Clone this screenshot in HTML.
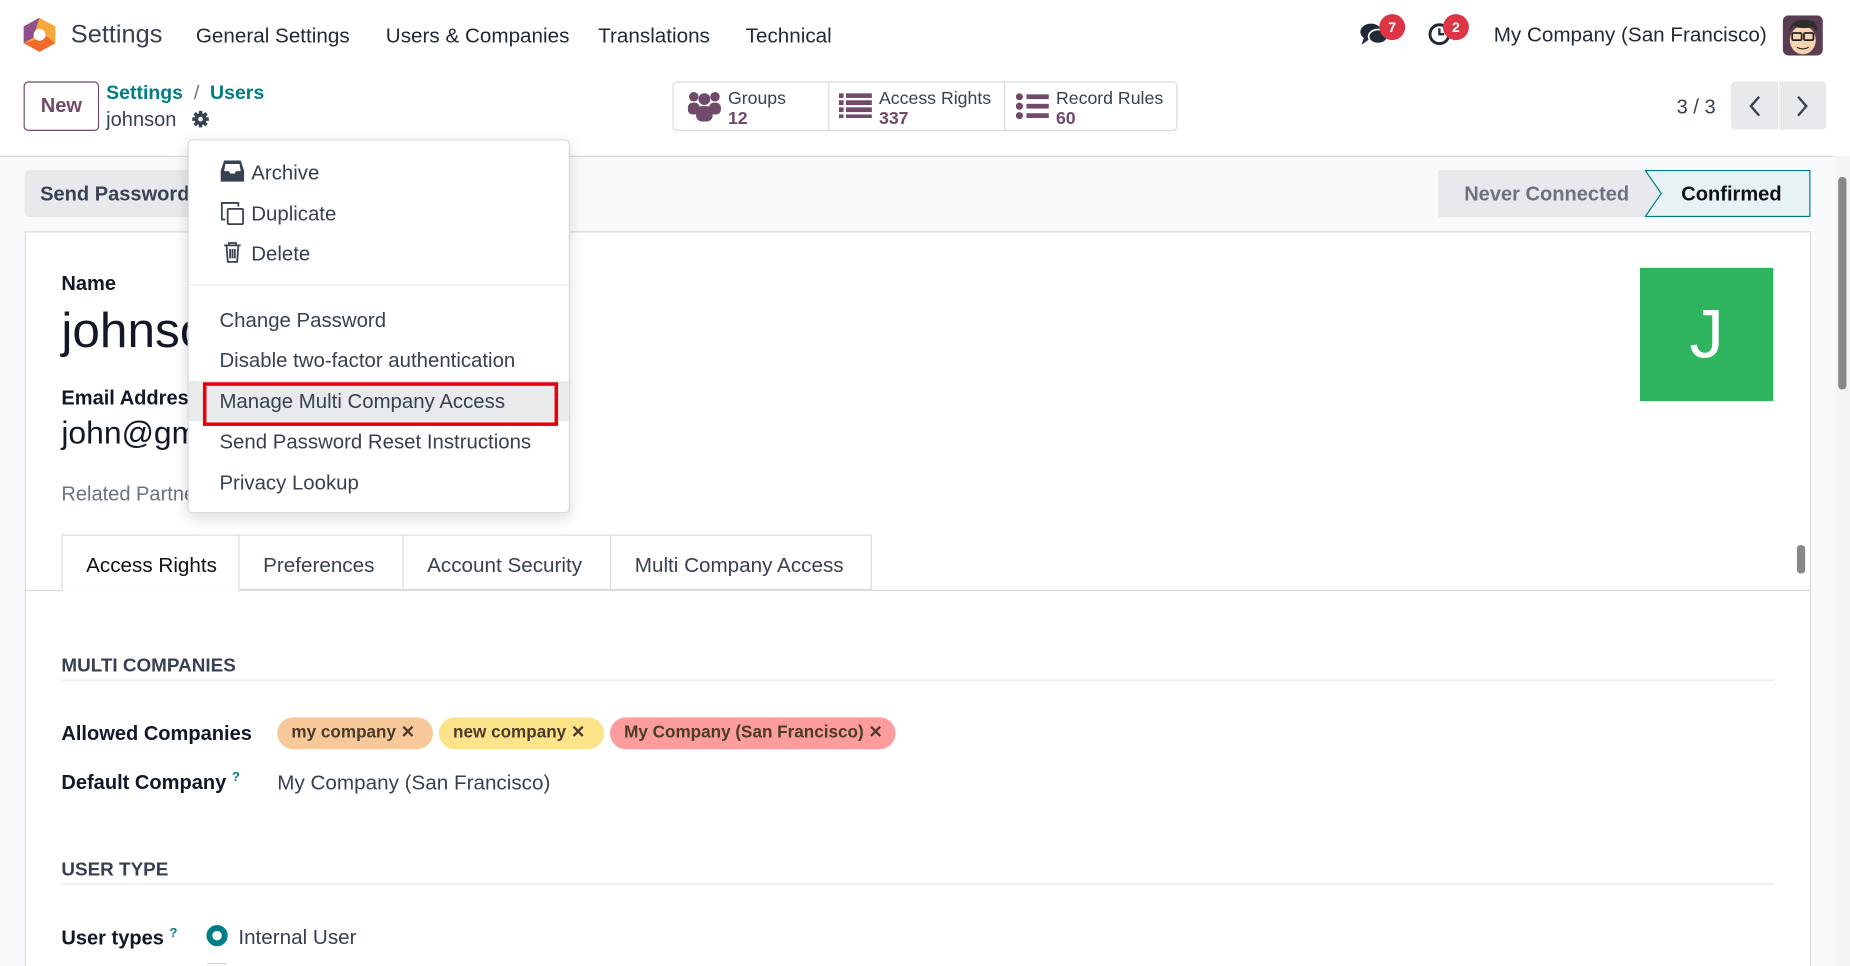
<!DOCTYPE html>
<html><head><meta charset="utf-8"><style>
*{box-sizing:border-box;margin:0;padding:0}
html,body{width:1850px;height:966px;overflow:hidden;background:#fff}
#w{position:absolute;left:0;top:0;width:1568px;height:819px;transform:scale(1.17985);transform-origin:0 0;font-family:"Liberation Sans",sans-serif;color:#374151;background:#fff;overflow:hidden}
.a{position:absolute;white-space:nowrap}
.nav{font-size:17.5px;color:#1f2937;top:20px}
.pur{fill:#71496a}
.di{font-size:17.3px;color:#374151;left:26px}
.lbl{font-weight:bold;font-size:17px;color:#111827}
.tag{position:absolute;top:608px;height:27px;border-radius:14px;font-size:14.5px;font-weight:bold;color:#4b3b2b;padding:5px 12px;white-space:nowrap}
.tab{position:absolute;top:453px;height:47px;border:1px solid #d8dadd;border-left:none;font-size:17.5px;color:#374151;padding:15px 20px;white-space:nowrap}
</style></head><body><div id="w">
<svg class="a" style="left:20px;top:15px" width="27" height="29" viewBox="0 0 27 29"><polygon points="13.5,0 27,7.5 27,21.5 13.5,29 0,21.5 0,7.5" fill="#f7a83c"/><polygon points="13.5,0 0,7.5 0,21.5 8,17" fill="#8f4f8e"/><polygon points="0,21.5 13.5,29 27,21.5 20,16" fill="#f06a2b"/><circle cx="13.5" cy="14.5" r="5" fill="#fff"/></svg>
<div class="a" style="left:60px;top:17px;font-size:21.5px;color:#374151">Settings</div>
<div class="a nav" style="left:166px">General Settings</div>
<div class="a nav" style="left:327px">Users &amp; Companies</div>
<div class="a nav" style="left:507px">Translations</div>
<div class="a nav" style="left:632px">Technical</div>
<svg class="a" style="left:1152px;top:18px" width="26" height="22" viewBox="0 0 26 22"><ellipse cx="10" cy="9" rx="9" ry="7" fill="#1f2937"/><path d="M4 14 L2 20 L9 15Z" fill="#1f2937"/><ellipse cx="16" cy="13" rx="8" ry="6" fill="#1f2937" stroke="#fff" stroke-width="1.5"/></svg>
<div class="a" style="left:1169px;top:12px;width:22px;height:22px;border-radius:11px;background:#dc3545;color:#fff;font-size:12px;font-weight:bold;text-align:center;line-height:22px">7</div>
<svg class="a" style="left:1210px;top:19px" width="20" height="20"><circle cx="10" cy="10" r="8" fill="none" stroke="#1f2937" stroke-width="2.5"/><path d="M10 5V10H14" stroke="#1f2937" stroke-width="2" fill="none"/></svg>
<div class="a" style="left:1223px;top:12px;width:22px;height:22px;border-radius:11px;background:#dc3545;color:#fff;font-size:12px;font-weight:bold;text-align:center;line-height:22px">2</div>
<div class="a" style="left:1266px;top:19px;font-size:17.5px;color:#1f2937">My Company (San Francisco)</div>
<svg class="a" style="left:1511px;top:13px" width="34" height="34"><rect width="34" height="34" rx="5" fill="#5a3d52"/><ellipse cx="17" cy="21" rx="11" ry="12" fill="#f7d2b0"/><path d="M5 14 Q8 2 20 4 Q30 4 29 14 L26 10 Q15 12 9 9Z" fill="#2d2d2d"/><rect x="8" y="15" width="8" height="6" rx="1" fill="none" stroke="#222" stroke-width="1.5"/><rect x="18" y="15" width="8" height="6" rx="1" fill="none" stroke="#222" stroke-width="1.5"/><path d="M12 27 Q17 30 22 27" stroke="#222" fill="none"/></svg>
<div class="a" style="left:20px;top:69px;width:64px;height:42px;border:1px solid #71496a;border-radius:4px;color:#71496a;font-size:17px;font-weight:bold;text-align:center;line-height:40px">New</div>
<div class="a" style="left:90px;top:70px;font-size:16.5px;color:#017e84;font-weight:bold">Settings <span style="color:#6b7280;font-weight:normal">&nbsp;/&nbsp;</span> Users</div>
<div class="a" style="left:90px;top:92px;font-size:17px;color:#374151">johnson</div>
<svg class="a" style="left:162px;top:93px" width="16" height="16" viewBox="0 0 16 16"><circle cx="8" cy="8" r="5" fill="#374151"/><g stroke="#374151" stroke-width="3"><path d="M8 1V15M1 8H15M3 3L13 13M13 3L3 13"/></g><circle cx="8" cy="8" r="2" fill="#fff"/></svg>
<div class="a" style="left:570px;top:69px;width:428px;height:42px;border:1px solid #d8dadd;border-radius:4px"></div>
<div class="a" style="left:702px;top:70px;width:1px;height:40px;background:#d8dadd"></div>
<div class="a" style="left:851px;top:70px;width:1px;height:40px;background:#d8dadd"></div>
<svg class="a" style="left:582px;top:76px" width="30" height="28"><circle cx="6" cy="6" r="4" class="pur"/><circle cx="24" cy="6" r="4" class="pur"/><circle cx="15" cy="8" r="5" class="pur"/><rect x="1" y="11" width="10" height="10" rx="4" class="pur"/><rect x="19" y="11" width="10" height="10" rx="4" class="pur"/><rect x="8" y="14" width="14" height="13" rx="5" class="pur"/></svg>
<div class="a" style="left:617px;top:75px;font-size:15px;color:#374151">Groups</div>
<div class="a" style="left:617px;top:92px;font-size:15px;color:#71496a;font-weight:bold">12</div>
<svg class="a" style="left:711px;top:79px" width="28" height="22"><g class="pur"><rect x="0" y="0" width="4" height="4"/><rect x="6" y="0" width="22" height="4"/><rect x="0" y="6" width="4" height="4"/><rect x="6" y="6" width="22" height="4"/><rect x="0" y="12" width="4" height="4"/><rect x="6" y="12" width="22" height="4"/><rect x="0" y="18" width="4" height="3"/><rect x="6" y="18" width="22" height="3"/></g></svg>
<div class="a" style="left:745px;top:75px;font-size:15px;color:#374151">Access Rights</div>
<div class="a" style="left:745px;top:92px;font-size:15px;color:#71496a;font-weight:bold">337</div>
<svg class="a" style="left:861px;top:79px" width="28" height="22"><g class="pur"><circle cx="3" cy="3" r="3"/><rect x="9" y="1" width="19" height="4"/><circle cx="3" cy="11" r="3"/><rect x="9" y="9" width="19" height="4"/><circle cx="3" cy="19" r="3"/><rect x="9" y="17" width="19" height="4"/></g></svg>
<div class="a" style="left:895px;top:75px;font-size:15px;color:#374151">Record Rules</div>
<div class="a" style="left:895px;top:92px;font-size:15px;color:#71496a;font-weight:bold">60</div>
<div class="a" style="left:1421px;top:81px;font-size:17px;color:#374151">3 / 3</div>
<div class="a" style="left:1467px;top:69px;width:81px;height:41px;background:#e7e9ed;border-radius:4px"></div>
<div class="a" style="left:1507px;top:69px;width:1px;height:41px;background:#fff"></div>
<svg class="a" style="left:1480px;top:80px" width="56" height="20" fill="none" stroke="#374151" stroke-width="2"><path d="M11 2L4 10L11 18M44 2L51 10L44 18"/></svg>
<div class="a" style="left:0;top:132px;width:1555px;height:687px;background:#f9fafb;border-top:1px solid #d8dadd"></div>
<div class="a" style="left:21px;top:144px;width:145px;height:40px;background:#e7e9ed;border-radius:4px;font-size:17px;font-weight:bold;color:#374151;padding:11px 13px">Send Password</div>
<div class="a" style="left:1219px;top:144px;width:190px;height:40px;background:#e7e9ed;font-size:17px;font-weight:bold;color:#6b7280;padding:11px 22px">Never Connected</div>
<svg class="a" style="left:1394px;top:144px" width="141" height="40"><polygon points="0.5,0.5 140,0.5 140,39.5 0.5,39.5 14,20" fill="#e6f2f3" stroke="#017e84"/></svg>
<div class="a" style="left:1425px;top:155px;font-size:17px;font-weight:bold;color:#111">Confirmed</div>
<div class="a" style="left:21px;top:196px;width:1514px;height:623px;background:#fff;border:1px solid #d8dadd;border-bottom:none"></div>
<div class="a" style="left:52px;top:231px;font-size:17px;font-weight:bold;color:#111827">Name</div>
<div class="a" style="left:52px;top:256px;font-size:42px;color:#111827">johnson</div>
<div class="a" style="left:52px;top:328px;font-size:17px;font-weight:bold;color:#111827">Email Address</div>
<div class="a" style="left:52px;top:352px;font-size:27px;color:#111827">john@gmail.com</div>
<div class="a" style="left:52px;top:409px;font-size:17px;color:#6b7280">Related Partner</div>
<div class="a" style="left:1390px;top:227px;width:113px;height:113px;background:#2fb45f;color:#fff;font-size:58px;text-align:center;line-height:113px">J</div>
<div class="a" style="left:22px;top:500px;width:1512px;height:1px;background:#d8dadd"></div>
<div class="a" style="left:52px;top:453px;width:151px;height:48px;border:1px solid #d8dadd;border-bottom:none;background:#fff;font-size:17.5px;color:#111;padding:15px 20px">Access Rights</div>
<div class="tab" style="left:203px;width:139px">Preferences</div>
<div class="tab" style="left:342px;width:176px">Account Security</div>
<div class="tab" style="left:518px;width:221px">Multi Company Access</div>
<div class="a" style="left:1523px;top:462px;width:7px;height:24px;background:#888;border-radius:3px"></div>
<div class="a" style="left:52px;top:556px;font-size:16px;font-weight:bold;color:#374151">MULTI COMPANIES</div>
<div class="a" style="left:52px;top:576px;width:1452px;height:1px;background:#e5e7eb"></div>
<div class="a lbl" style="left:52px;top:612px">Allowed Companies</div>
<div class="tag" style="left:235px;width:132px;background:#f6c89a">my company ✕</div>
<div class="tag" style="left:372px;width:140px;background:#fbe38a">new company ✕</div>
<div class="tag" style="left:517px;width:242px;background:#fd9c9c">My Company (San Francisco) ✕</div>
<div class="a lbl" style="left:52px;top:653px">Default Company <sup style="color:#017e84;font-size:11px">?</sup></div>
<div class="a" style="left:235px;top:653px;font-size:17.5px;color:#374151">My Company (San Francisco)</div>
<div class="a" style="left:52px;top:729px;font-size:16px;font-weight:bold;color:#374151">USER TYPE</div>
<div class="a" style="left:52px;top:749px;width:1452px;height:1px;background:#e5e7eb"></div>
<div class="a lbl" style="left:52px;top:785px">User types <sup style="color:#017e84;font-size:11px">?</sup></div>
<div class="a" style="left:175px;top:784px;width:18px;height:18px;border-radius:9px;border:5px solid #017e84;background:#fff"></div>
<div class="a" style="left:202px;top:784px;font-size:17.5px;color:#374151">Internal User</div>
<div class="a" style="left:175px;top:816px;width:18px;height:3px;border-top:1px solid #ccc;border-radius:9px 9px 0 0"></div>
<div class="a" style="left:1555px;top:132px;width:13px;height:687px;background:#f5f5f5"></div>
<div class="a" style="left:1558px;top:150px;width:7px;height:180px;background:#888;border-radius:3px"></div>
<div class="a" style="left:159px;top:118px;width:324px;height:317px;background:#fff;border:1px solid #d8dadd;border-radius:4px;box-shadow:0 4px 12px rgba(0,0,0,.15)">
<svg class="a" style="left:27px;top:17px" width="20" height="18"><path d="M3 0H17L20 9V18H0V9Z" fill="#374151"/><path d="M4 3H16L17 9H13L12 11H8L7 9H3Z" fill="#fff"/></svg>
<div class="a di" style="left:53px;top:17px">Archive</div>
<svg class="a" style="left:27px;top:52px" width="20" height="20" fill="none" stroke="#374151" stroke-width="1.5"><rect x="6" y="6" width="13" height="13" rx="1"/><path d="M4 15H1V1H15V4"/></svg>
<div class="a di" style="left:53px;top:52px">Duplicate</div>
<svg class="a" style="left:29px;top:86px" width="16" height="18" fill="none" stroke="#374151" stroke-width="1.5"><path d="M1 3H15M5 3V1H11V3M3 3L4 17H12L13 3M6 6V14M8 6V14M10 6V14"/></svg>
<div class="a di" style="left:53px;top:86px">Delete</div>
<div class="a" style="left:0;top:122px;width:322px;height:1px;background:#e5e7eb"></div>
<div class="a di" style="top:142px">Change Password</div>
<div class="a di" style="top:176px">Disable two-factor authentication</div>
<div class="a" style="left:0;top:204px;width:322px;height:34px;background:#e9eaec"></div>
<div class="a" style="left:12px;top:205px;width:301px;height:37px;border:3px solid #e8000b"></div>
<div class="a di" style="top:211px">Manage Multi Company Access</div>
<div class="a di" style="top:245px">Send Password Reset Instructions</div>
<div class="a di" style="top:280px">Privacy Lookup</div>
</div>
</div></body></html>
